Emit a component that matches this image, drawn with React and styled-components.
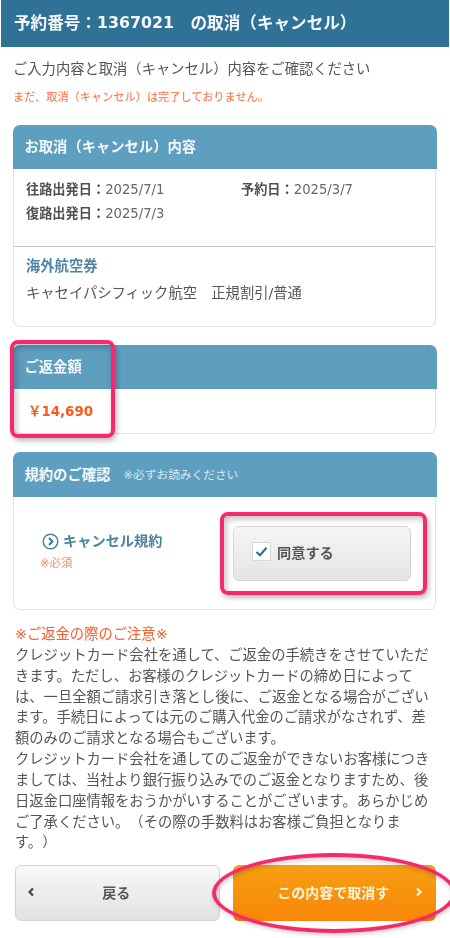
import React from 'react';
import styled, { createGlobalStyle } from 'styled-components';

const GlobalStyle = createGlobalStyle`
  html, body {
    margin: 0;
    padding: 0;
    background: #ffffff;
  }
  body {
    font-family: 'DejaVu Sans', 'Noto Sans CJK JP', sans-serif;
    color: #555555;
    text-spacing-trim: space-all;
  }
`;

const Page = styled.div`
  position: relative;
  width: 450px;
  height: 938px;
  overflow: hidden;
  padding: 0 1px;
  box-sizing: border-box;
  filter: blur(0.35px);
`;

const PageTitle = styled.h1`
  margin: 0;
  height: 47px;
  padding: 0 0 3px 13px;
  display: flex;
  align-items: center;
  box-sizing: border-box;
  background: #2f7295;
  color: #f4f8fa;
  font-size: 16.6px;
  font-weight: 700;
  white-space: pre;
`;

const BookingNo = styled.span`
  font-size: 15.8px;
`;

const Content = styled.div`
  padding: 0 13px 0 12px;
`;

const Intro = styled.p`
  margin: 12px 0 0;
  font-size: 14.3px;
  line-height: 20px;
  color: #555555;
`;

const Warning = styled.p`
  margin: 11px 0 0;
  font-size: 11.2px;
  line-height: 16px;
  color: #ff6a3c;
`;

const Card = styled.section`
  position: relative;
  margin-top: ${({ $top }) => $top}px;
  height: ${({ $height }) => $height}px;
  border: 1.5px solid #e2e2e2;
  border-top: none;
  border-radius: 7px;
  box-sizing: border-box;
`;

const CardHead = styled.header`
  margin: 0 -1.5px;
  height: ${({ $height }) => $height || 44}px;
  padding: 0 0 3px 12px;
  display: flex;
  align-items: center;
  gap: 13px;
  box-sizing: border-box;
  background: #5e9ebf;
  border-radius: 7px 7px 0 0;
  color: #f4f8fa;
  font-size: 14.3px;
  font-weight: 700;
`;

const HeadNote = styled.span`
  font-size: 11.7px;
  font-weight: 400;
  color: #d8e8f0;
`;

const DateGrid = styled.div`
  height: 78px;
  padding: 7px 12px 0;
  display: grid;
  box-sizing: border-box;
  grid-template-columns: 215px 1fr;
  grid-auto-rows: 24px;
  align-items: center;
  font-size: 13.2px;
  border-bottom: 1.5px solid #c8c8c8;
`;

const DateItem = styled.div`
  color: #666666;
  white-space: nowrap;
  b {
    color: #505050;
  }
`;

const Ticket = styled.div`
  padding: 7px 12px 0;
`;

const TicketType = styled.div`
  font-size: 14.3px;
  line-height: 24px;
  font-weight: 700;
  color: #4d86a3;
`;

const TicketName = styled.div`
  margin-top: 3px;
  font-size: 14.3px;
  line-height: 24px;
  color: #555555;
  white-space: pre;
`;

const Amount = styled.div`
  padding: 12px 0 0 14px;
  font-size: 13.4px;
  line-height: 22px;
  font-weight: 700;
  color: #ff5a14;
`;

const TermsBody = styled.div`
  display: flex;
  align-items: flex-start;
  padding: 29px 0 0 28px;
`;

const TermsLeft = styled.div`
  width: 191px;
  padding-top: 5px;
`;

const TermsLink = styled.div`
  display: flex;
  align-items: center;
  gap: 4px;
  font-size: 14.2px;
  line-height: 20px;
  font-weight: 700;
  color: #4a83a0;
`;

const Required = styled.div`
  margin: 4px 0 0 -2px;
  font-size: 11.4px;
  line-height: 16px;
  color: #ff8a6c;
`;

const AgreeBox = styled.label`
  width: 178px;
  height: 55px;
  padding: 0 0 4px 18px;
  display: flex;
  align-items: center;
  gap: 6px;
  box-sizing: border-box;
  background: linear-gradient(#f6f6f6, #e4e4e4);
  border: 1.5px solid #d4d4d4;
  border-radius: 6px;
  font-size: 14.2px;
  font-weight: 700;
  color: #555555;
`;

const CheckMark = styled.span`
  width: 17px;
  height: 17px;
  display: flex;
  align-items: center;
  justify-content: center;
  background: #ffffff;
  border: 1px solid #d8d8d8;
`;

const Notice = styled.div`
  margin: 14px 0 0 2px;
  width: 418px;
  font-size: 14.3px;
  line-height: 20.85px;
  color: #555555;
`;

const NoticeTitle = styled.div`
  color: #ff5a2a;
`;

const NoticeText = styled.p`
  margin: 0;
`;

const Buttons = styled.div`
  margin: 12px 0 0 2px;
  display: flex;
  gap: 13px;
`;

const NavButton = styled.button`
  width: ${({ $primary }) => ($primary ? 204 : 205)}px;
  height: 56px;
  padding: 0 12px 2px 10px;
  display: flex;
  align-items: center;
  box-sizing: border-box;
  border-radius: 6px;
  border: ${({ $primary }) => ($primary ? 'none' : '1.5px solid #d4d4d4')};
  background: ${({ $primary }) =>
    $primary ? 'linear-gradient(#f6a012, #f98608)' : 'linear-gradient(#f8f8f8, #e2e2e2)'};
  color: ${({ $primary }) => ($primary ? '#fff4e0' : '#555555')};
  font-family: inherit;
  font-size: 14px;
  font-weight: 700;
`;

const NavLabel = styled.span`
  flex: 1;
  text-align: center;
`;

const ChevronSlot = styled.span`
  width: 10px;
`;

// hand-drawn annotations laid over the screenshot
const PinkBox = styled.div`
  position: absolute;
  left: ${({ $left }) => $left}px;
  top: ${({ $top }) => $top}px;
  width: ${({ $width }) => $width}px;
  height: ${({ $height }) => $height}px;
  box-sizing: border-box;
  border: 4.5px solid #f5296b;
  border-radius: 8px;
  box-shadow: 2px 3px 5px rgba(0, 0, 0, 0.25), inset 2px 3px 6px rgba(0, 0, 0, 0.25);
  pointer-events: none;
`;

const PinkEllipse = styled.div`
  position: absolute;
  left: 212px;
  top: 853px;
  width: 244px;
  height: 80px;
  box-sizing: border-box;
  border: 4.5px solid #f5296b;
  border-radius: 50%;
  box-shadow: 1px 2px 4px rgba(0, 0, 0, 0.2), inset 1px 2px 5px rgba(0, 0, 0, 0.2);
  pointer-events: none;
`;

const Chevron = ({ dir, color }) => (
  <svg width="10" height="12" viewBox="0 0 10 12">
    <path
      d={dir === 'left' ? 'M7 2.5 3.5 6 7 9.5' : 'M3 2.5 6.5 6 3 9.5'}
      fill="none"
      stroke={color}
      strokeWidth="2.2"
    />
  </svg>
);

const CircleArrow = () => (
  <svg width="17" height="17" viewBox="0 0 17 17">
    <circle cx="8.5" cy="8.5" r="7.3" fill="none" stroke="#4a83a0" strokeWidth="1.5" />
    <path d="M7 5 10.4 8.5 7 12" fill="none" stroke="#3d7896" strokeWidth="2" />
  </svg>
);

const Check = () => (
  <svg width="13" height="11" viewBox="0 0 13 11">
    <path d="M1.5 6 5 9.2 11.5 1.8" fill="none" stroke="#2f7295" strokeWidth="2.2" />
  </svg>
);

export default function App() {
  return (
    <Page>
      <GlobalStyle />
      <PageTitle>
        予約番号：<BookingNo>1367021</BookingNo>　の取消（キャンセル）
      </PageTitle>
      <Content>
        <Intro>ご入力内容と取消（キャンセル）内容をご確認ください</Intro>
        <Warning>まだ、取消（キャンセル）は完了しておりません。</Warning>

        <Card $top={19} $height={202}>
          <CardHead>お取消（キャンセル）内容</CardHead>
          <DateGrid>
            <DateItem><b>往路出発日：</b>2025/7/1</DateItem>
            <DateItem><b>予約日：</b>2025/3/7</DateItem>
            <DateItem><b>復路出発日：</b>2025/7/3</DateItem>
          </DateGrid>
          <Ticket>
            <TicketType>海外航空券</TicketType>
            <TicketName>キャセイパシフィック航空　正規割引/普通</TicketName>
          </Ticket>
        </Card>

        <Card $top={18} $height={89}>
          <CardHead>ご返金額</CardHead>
          <Amount>￥14,690</Amount>
        </Card>

        <Card $top={18} $height={158}>
          <CardHead $height={45}>
            規約のご確認
            <HeadNote>※必ずお読みください</HeadNote>
          </CardHead>
          <TermsBody>
            <TermsLeft>
              <TermsLink>
                <CircleArrow />
                キャンセル規約
              </TermsLink>
              <Required>※必須</Required>
            </TermsLeft>
            <AgreeBox>
              <CheckMark>
                <Check />
              </CheckMark>
              同意する
            </AgreeBox>
          </TermsBody>
        </Card>

        <Notice>
          <NoticeTitle>※ご返金の際のご注意※</NoticeTitle>
          <NoticeText>
            クレジットカード会社を通して、ご返金の手続きをさせていただきます。ただし、お客様のクレジットカードの締め日によっては、一旦全額ご請求引き落とし後に、ご返金となる場合がございます。手続日によっては元のご購入代金のご請求がなされず、差額のみのご請求となる場合もございます。
          </NoticeText>
          <NoticeText>
            クレジットカード会社を通してのご返金ができないお客様につきましては、当社より銀行振り込みでのご返金となりますため、後日返金口座情報をおうかがいすることがございます。あらかじめご了承ください。（その際の手数料はお客様ご負担となります。）
          </NoticeText>
        </Notice>

        <Buttons>
          <NavButton>
            <Chevron dir="left" color="#444444" />
            <NavLabel>戻る</NavLabel>
            <ChevronSlot />
          </NavButton>
          <NavButton $primary>
            <ChevronSlot />
            <NavLabel>この内容で取消す</NavLabel>
            <Chevron dir="right" color="#fff4e0" />
          </NavButton>
        </Buttons>
      </Content>

      <PinkBox $left={10} $top={340} $width={105} $height={98} />
      <PinkBox $left={220} $top={512} $width={207} $height={83} />
      <PinkEllipse />
    </Page>
  );
}
